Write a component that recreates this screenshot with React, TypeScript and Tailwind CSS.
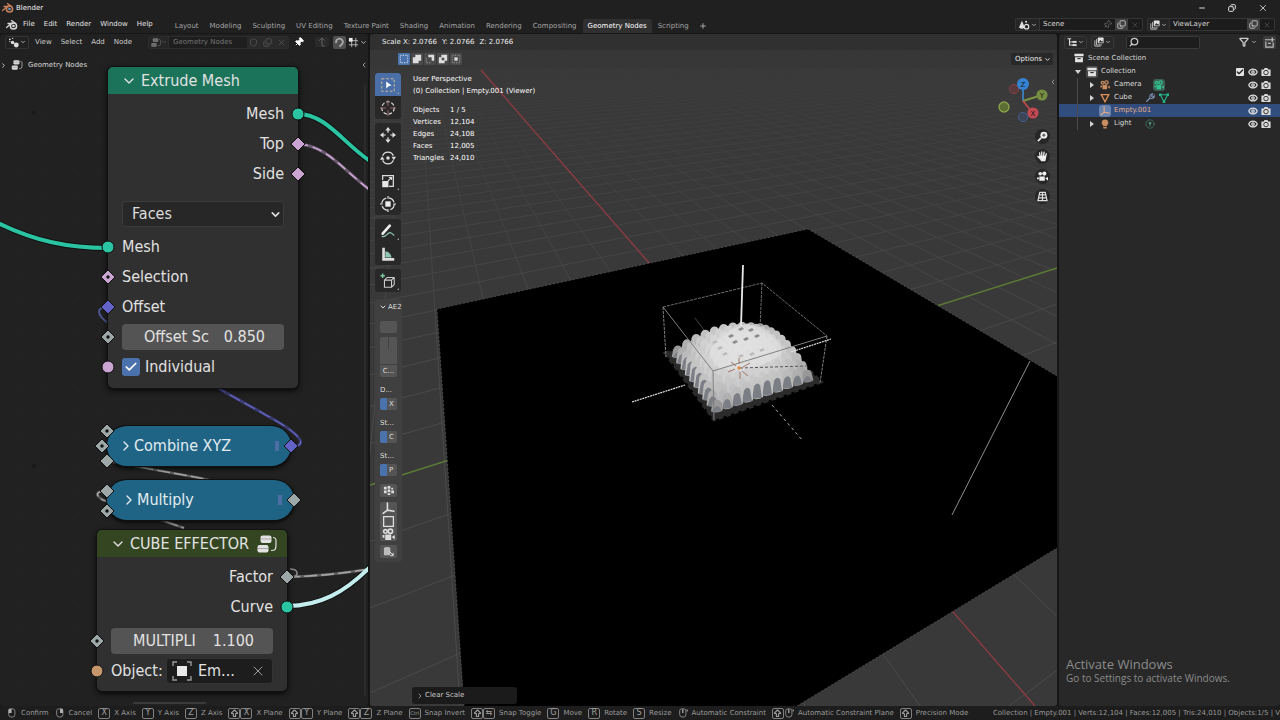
import type { ReactNode } from "react";
import { ArrowBigUp, Check, ChevronDown, ChevronLeft, ChevronRight, Copy, Eye, Filter, Minus, Pin, Plus, Search, Shield, X } from "lucide-react";

const workspaces = ["Layout", "Modeling", "Sculpting", "UV Editing", "Texture Paint", "Shading", "Animation", "Rendering", "Compositing", "Geometry Nodes", "Scripting"];

const stats = [
  ["Objects", "1 / 5"],
  ["Vertices", "12,104"],
  ["Edges", "24,108"],
  ["Faces", "12,005"],
  ["Triangles", "24,010"],
];

const hints: { keys: string[]; label: string }[] = [
  { keys: ["lmb"], label: "Confirm" },
  { keys: ["rmb"], label: "Cancel" },
  { keys: ["X"], label: "X Axis" },
  { keys: ["Y"], label: "Y Axis" },
  { keys: ["Z"], label: "Z Axis" },
  { keys: ["shift", "X"], label: "X Plane" },
  { keys: ["shift", "Y"], label: "Y Plane" },
  { keys: ["shift", "Z"], label: "Z Plane" },
  { keys: ["Ctrl"], label: "Snap Invert" },
  { keys: ["shift", "tab"], label: "Snap Toggle" },
  { keys: ["G"], label: "Move" },
  { keys: ["R"], label: "Rotate" },
  { keys: ["S"], label: "Resize" },
  { keys: ["mmb"], label: "Automatic Constraint" },
  { keys: ["shift", "mmb"], label: "Automatic Constraint Plane" },
  { keys: ["shift"], label: "Precision Mode" },
];

/* ---------- icons ---------- */

function BlenderLogo({ color, ring }: { color: string; ring: string }) {
  return (
    <svg viewBox="0 0 24 20" className="h-[10px] w-[12px] shrink-0" aria-hidden="true">
      <path d="M1 15 L12 6 M4 7 H14 M11 1 L19 7" stroke={color} strokeWidth="2.6" strokeLinecap="round" fill="none" />
      <circle cx="15" cy="12" r="6.2" stroke={color} strokeWidth="3" fill="none" />
      <circle cx="15" cy="12" r="2.6" fill={ring} />
    </svg>
  );
}

function NodeTreeIcon({ className }: { className?: string }) {
  return (
    <svg viewBox="0 0 20 18" className={className} aria-hidden="true">
      <rect x="3.5" y="0.5" width="11" height="7.5" rx="2" fill="currentColor" />
      <rect x="0.5" y="10" width="11" height="7.5" rx="2" fill="currentColor" />
      <path d="M3.5 4 H14 M1 13.5 H11" stroke="#00000055" strokeWidth="0.8" />
      <path d="M16 2.5 C19.5 2.5 19 5 19 9 C19 14.5 18.5 15.5 14 15.5" stroke="currentColor" strokeWidth="1.2" fill="none" />
    </svg>
  );
}

function NodeEditorIcon() {
  return (
    <svg viewBox="0 0 12 12" className="size-[11px]" aria-hidden="true">
      <g fill="#dcdcdc">
        <circle cx="2" cy="2.5" r="1" />
        <circle cx="5" cy="1.5" r="0.7" />
        <circle cx="5" cy="6" r="1.9" />
        <circle cx="9" cy="8.8" r="2.7" />
        <circle cx="2" cy="5" r="0.7" />
      </g>
    </svg>
  );
}

function SceneIcon() {
  return (
    <svg viewBox="0 0 14 12" className="h-[10px] w-[12px]" aria-hidden="true">
      <path d="M4.5 1 L8 9 Q4.5 12 1 9 Z" fill="#e0e0e0" />
      <circle cx="10" cy="8" r="2.7" fill="none" stroke="#e0e0e0" strokeWidth="1.4" />
      <circle cx="9.5" cy="2" r="1.2" fill="#e0e0e0" />
    </svg>
  );
}

function LayersIcon() {
  return (
    <svg viewBox="0 0 12 12" className="size-[10px]" aria-hidden="true">
      <path d="M1 4 V11 H8 M3 2.5 V9.5 H9.5" stroke="#d0d0d0" fill="none" />
      <rect x="4.5" y="0.5" width="7" height="7" rx="1" fill="#e0e0e0" />
      <path d="M5.5 6.5 L7.5 3.5 L9 5.2 L10 4.4 L11 6.5 Z" fill="#333" />
    </svg>
  );
}

function TreeIcon() {
  return (
    <svg viewBox="0 0 12 12" className="size-[10px]" aria-hidden="true">
      <path d="M0.5 2 H5 M3 2 V9.5 H7 M3 6 H7" stroke="#d8d8d8" strokeWidth="1.3" fill="none" />
      <rect x="6.5" y="4.7" width="5" height="2.4" fill="#d8d8d8" />
      <rect x="6.5" y="8.5" width="5" height="2.4" fill="#d8d8d8" />
    </svg>
  );
}

function MovieCamera({ className }: { className?: string }) {
  return (
    <svg viewBox="0 0 12 12" className={className} aria-hidden="true">
      <g fill="none" stroke="currentColor" strokeWidth="1.5">
        <circle cx="3.2" cy="3.2" r="1.7" />
        <circle cx="7.8" cy="3" r="2" />
      </g>
      <path d="M3 6 H8.5 V11 H3 Z M9 8.3 L11.8 6.5 V10.6 Z M0.5 6.5 H2.3 V9 H0.5 Z" fill="currentColor" />
    </svg>
  );
}

function RenderCamera() {
  return (
    <svg viewBox="0 0 12 12" className="size-[10px] text-[#dadada]" aria-hidden="true">
      <path d="M0.5 3 H3.5 L4.2 1.2 H7.8 L8.5 3 H11.5 V10.8 H0.5 Z" fill="currentColor" />
      <circle cx="6" cy="6.7" r="2.7" fill="none" stroke="#282828" strokeWidth="1.1" />
    </svg>
  );
}

function ArchiveIcon() {
  return (
    <svg viewBox="0 0 12 12" className="size-[10px]" aria-hidden="true">
      <path d="M0.5 1 H11.5 V4 H0.5 Z M1.3 5 H10.7 V11 H1.3 Z" fill="#e4e4e4" />
      <rect x="4" y="6" width="4" height="1.4" fill="#333" />
    </svg>
  );
}

function EmptyAxes({ className }: { className?: string }) {
  return (
    <svg viewBox="0 0 12 12" className={className} aria-hidden="true">
      <path d="M5 1 V7.5 L1 10.5 M5 7.5 L11 8.5" stroke="currentColor" strokeWidth="1.5" fill="none" strokeLinecap="round" />
    </svg>
  );
}

function MouseIcon({ button }: { button: string }) {
  return (
    <svg viewBox="0 0 12 12" className="h-[10px] w-[10px]" aria-hidden="true">
      <path d="M2 3.5 Q2 1 4.5 1 H7 Q9.5 1 9.5 3.5 V8 Q9.5 11 6 11 Q2 11 2 8 Z" stroke="#8c8c8c" fill="none" strokeWidth="1.1" />
      {button === "lmb" && <path d="M2 1 H5.5 V6 H2 Z" fill="#b0b0b0" />}
      {button === "rmb" && <path d="M6 1 H9.5 V6 H6 Z" fill="#b0b0b0" />}
      {button === "mmb" && <path d="M5 1.5 H6.5 V6 H5 Z M10.5 1 L12 3 L10.5 5 Z" fill="#b0b0b0" />}
    </svg>
  );
}

/* ---------- top bars ---------- */

function TitleBar() {
  return (
    <div className="flex h-4 shrink-0 items-center justify-between bg-[#202020] pl-[2px] pr-3">
      <div className="flex items-center gap-[2px] text-[#f0f0f0]">
        <BlenderLogo color="#c9805a" ring="#6f97c4" />
        <span>Blender</span>
      </div>
      <div className="flex items-center gap-[22px] text-[#dddddd]">
        <button aria-label="Minimize"><Minus className="size-2" strokeWidth={3} /></button>
        <button aria-label="Restore"><Copy className="size-2 -scale-x-100" strokeWidth={3} /></button>
        <button aria-label="Close"><X className="size-[10px]" strokeWidth={2} /></button>
      </div>
    </div>
  );
}

function DataBlock({ icon, name, pin }: { icon: ReactNode; name: string; pin?: boolean }) {
  return (
    <div className="flex h-[13px] w-[128px] items-center overflow-hidden rounded-[2px] border border-[#353535] bg-[#1c1c1c]">
      <button className="flex h-full items-center gap-[1px] border-r border-[#353535] bg-[#252525] px-[2px]" aria-label={`Browse ${name}`}>
        {icon}
        <ChevronDown className="size-[6px]" strokeWidth={3} />
      </button>
      <span className="flex-1 pl-[3px] text-[#d8d8d8]">{name}</span>
      {pin && <Pin className="mr-[3px] size-[9px] rotate-45 text-[#777777]" />}
      <button className="flex h-full items-center bg-[#3f3f3f] px-[2px] text-[#dddddd]" aria-label={`New ${name}`}><Copy className="size-[9px] -scale-y-100" /></button>
      <button className="px-[3px] text-[#555555]" aria-label={`Remove ${name}`}><X className="size-2" /></button>
    </div>
  );
}

function TopBar() {
  return (
    <div className="flex h-[17px] shrink-0 items-center bg-[#202020] pl-[6px] pr-[5px]">
      <BlenderLogo color="#d8d8d8" ring="#d8d8d8" />
      <nav className="ml-[5px] flex gap-[9px] text-[#e4e4e4]">
        {["File", "Edit", "Render", "Window", "Help"].map((m) => (
          <button key={m}>{m}</button>
        ))}
      </nav>
      <div className="ml-[17px] flex h-full items-end gap-[1px] text-[#a4a4a4]">
        {workspaces.map((w) => (
          <button
            key={w}
            className={`h-[14px] rounded-t-[3px] px-[5px] ${w === "Geometry Nodes" ? "bg-[#303030] text-white" : ""}`}
          >
            {w}
          </button>
        ))}
        <button className="h-[14px] px-1" aria-label="Add workspace"><Plus className="size-2" strokeWidth={3} /></button>
      </div>
      <div className="ml-auto flex items-center gap-1 text-[#cccccc]">
        <DataBlock icon={<SceneIcon />} name="Scene" pin />
        <DataBlock icon={<LayersIcon />} name="ViewLayer" />
      </div>
    </div>
  );
}

/* ---------- node editor ---------- */

const TEAL = "#2bc4a2";
const PINK = "#cba5d2";
const GREY = "#9da7a7";
const VIOLET = "#6363c7";

function Socket({ color, shape = "diamond", dot, side, x, y }: { color: string; shape?: string; dot?: boolean; side?: "left" | "right"; x?: number; y?: number }) {
  const place = side === "left" ? "-left-2 top-1/2 -translate-y-1/2" : side === "right" ? "-right-2 top-1/2 -translate-y-1/2" : "-translate-x-1/2 -translate-y-1/2";
  return (
    <svg viewBox="0 0 16 16" className={`absolute size-4 ${place}`} style={side ? undefined : { left: x, top: y }} aria-hidden="true">
      {shape === "circle" ? (
        <circle cx="8" cy="8" r="6" fill={color} stroke="#101010" strokeWidth="1" />
      ) : (
        <path d="M8 1 L15 8 L8 15 L1 8 Z" fill={color} stroke="#101010" strokeWidth="1" />
      )}
      {dot && <circle cx="8" cy="8" r="1.7" fill="#101010" />}
    </svg>
  );
}

function Row({ children, out }: { children: ReactNode; out?: boolean }) {
  return <div className={`relative flex h-[30px] items-center px-[14px] ${out ? "justify-end" : ""}`}>{children}</div>;
}

function NumberField({ id, label, value }: { id: string; label: string; value: string }) {
  return (
    <div className="flex h-[26px] w-full items-center justify-between rounded bg-[#545454] pl-[22px] pr-[19px] leading-5">
      <label htmlFor={id}>{label}</label>
      <input id={id} defaultValue={value} className="h-5 w-[44px] bg-transparent text-right outline-none" />
    </div>
  );
}

function CollapsedNode({ label, className }: { label: string; className: string }) {
  return (
    <div className={`absolute flex h-10 items-center rounded-[20px] bg-[#206485] text-[#e2ecf0] shadow-[0_0_0_1px_#111111,0_2px_5px_#000000] ${className}`}>
      <ChevronRight className="size-4" strokeWidth={2} />
      <span>{label}</span>
      <span className="ml-auto mr-[12px] h-[10px] w-[4px] bg-[#4d6ea5]" />
    </div>
  );
}

function NodeLinks() {
  return (
    <svg className="absolute inset-0 h-full w-full" fill="none" aria-hidden="true">
      <defs>
        <pattern id="dots" x="18" y="10" width="27" height="27" patternUnits="userSpaceOnUse">
          <rect width="1" height="1" fill="#2c2c2c" />
        </pattern>
      </defs>
      <rect width="100%" height="100%" fill="url(#dots)" />
      <rect x="32" y="61" width="4" height="4" fill="#1a1a1a" />
      <rect x="32" y="414" width="4" height="4" fill="#1a1a1a" />
      <g stroke="#101010" strokeWidth="6">
        <path d="M-2 173 C35 191 68 198 108 198" />
        <path d="M298 64 C326 64 343 93 370 111" />
        <path d="M287 556 C320 556 345 542 370 517" />
      </g>
      <path d="M-2 173 C35 191 68 198 108 198" stroke={TEAL} strokeWidth="4" />
      <path d="M298 64 C326 64 343 93 370 111" stroke={TEAL} strokeWidth="4" />
      <path d="M298 94 C326 95 343 120 370 140" stroke="#6a5a6f" strokeWidth="3" />
      <path d="M298 94 C326 95 343 120 370 140" stroke={PINK} strokeWidth="1.6" strokeDasharray="10 5" />
      <path d="M108 257 C95 257 97 265 108 273" stroke="#4c5893" strokeWidth="2" />
      <path d="M200 328 L273 369 C305 387 305 396 294 396" stroke="#3c3c74" strokeWidth="3" />
      <path d="M200 328 L273 369 C305 387 305 396 294 396" stroke="#6a6ac8" strokeWidth="1.2" strokeDasharray="12 5" />
      <g stroke="#5c5c5c" strokeWidth="2.6">
        <path d="M107 411 L200 428 L293 449" />
        <path d="M107 441 C94 441 96 446 103 450 L184 478" />
        <path d="M287 527 C320 526 345 523 370 519" />
      </g>
      <g stroke="#a4a4a4" strokeWidth="1.6" strokeDasharray="13 4">
        <path d="M107 411 L200 428 L293 449" />
        <path d="M107 441 C94 441 96 446 103 450 L184 478" />
        <path d="M287 527 C320 526 345 523 370 519" />
      </g>
      <path d="M287 556 C320 556 345 542 370 517" stroke="#c4eeee" strokeWidth="4" />
      <path d="M290 519 C298 519 300 525 292 528" stroke="#888888" strokeWidth="1.6" />
    </svg>
  );
}

function ExtrudeMeshNode() {
  return (
    <section className="absolute left-[108px] top-[17px] w-[190px] rounded-[5px] bg-[#303030] pb-[6px] shadow-[0_0_0_1px_#111111,0_2px_6px_#000000]">
      <h2 className="mb-[5px] flex h-[27px] items-center gap-1 rounded-t-[5px] bg-[#1b735a] pl-[13px]">
        <ChevronDown className="size-4" strokeWidth={2} />
        Extrude Mesh
      </h2>
      <Row out>Mesh<Socket color={TEAL} shape="circle" side="right" /></Row>
      <Row out>Top<Socket color={PINK} side="right" /></Row>
      <Row out>Side<Socket color={PINK} side="right" /></Row>
      <div className="relative mx-[14px] mb-[5px] mt-[12px] text-[#dddddd]">
        <select aria-label="Mode" className="h-[26px] w-full appearance-none rounded border border-[#3b3b3b] bg-[#272727] pl-[9px] outline-none">
          <option>Faces</option>
        </select>
        <ChevronDown className="pointer-events-none absolute right-[2px] top-[7px] size-[13px]" strokeWidth={3} />
      </div>
      <Row>Mesh<Socket color={TEAL} shape="circle" side="left" /></Row>
      <Row>Selection<Socket color={PINK} dot side="left" /></Row>
      <Row>Offset<Socket color={VIOLET} side="left" /></Row>
      <Row><NumberField id="offset-scale" label="Offset Sc" value="0.850" /><Socket color={GREY} dot side="left" /></Row>
      <Row>
        <label className="relative flex items-center gap-[5px]">
          <input type="checkbox" defaultChecked className="size-[18px] appearance-none rounded-[3px] bg-[#4c72ad]" />
          <Check className="absolute left-[2px] size-[14px] text-white" strokeWidth={3} />
          Individual
        </label>
        <Socket color={PINK} shape="circle" side="left" />
      </Row>
    </section>
  );
}

function CubeEffectorNode() {
  return (
    <section className="absolute left-[97px] top-[480px] w-[190px] rounded-[5px] bg-[#303030] pb-[5px] shadow-[0_0_0_1px_#111111,0_2px_6px_#000000]">
      <h2 className="mb-[5px] flex h-[27px] items-center rounded-t-[5px] bg-[#344621] pl-[13px]">
        <ChevronDown className="mr-1 size-4 shrink-0" strokeWidth={2} />
        CUBE EFFECTOR
        <NodeTreeIcon className="ml-auto mr-[10px] h-[18px] w-5 shrink-0" />
      </h2>
      <Row out>Factor<Socket color={GREY} side="right" /></Row>
      <Row out>Curve<Socket color={TEAL} shape="circle" side="right" /></Row>
      <div className="mt-1">
        <Row><NumberField id="multiplier" label="MULTIPLI" value="1.100" /><Socket color={GREY} dot side="left" /></Row>
      </div>
      <Row>
        <span>Object:</span>
        <button className="ml-auto flex h-[26px] w-[107px] items-center rounded border border-[#333333] bg-[#1d1d1d] pl-[5px] pr-[6px]">
          <svg viewBox="0 0 20 20" className="mr-[6px] size-5" aria-hidden="true">
            <path d="M1 5 V1 H5 M15 1 H19 V5 M19 15 V19 H15 M5 19 H1 V15" stroke="#999999" strokeWidth="1.4" fill="none" />
            <rect x="5" y="5" width="10" height="10" fill="#e8e8e8" />
          </svg>
          Em...
          <X className="ml-auto size-4" strokeWidth={1} />
        </button>
        <Socket color="#c5966c" shape="circle" side="left" />
      </Row>
    </section>
  );
}

function NodeEditor() {
  return (
    <section className="flex min-w-0 flex-[368_1_0%] flex-col overflow-hidden rounded-[3px] bg-[#212121]">
      <header className="flex h-4 shrink-0 items-center pl-[5px] text-[#cccccc]">
        <button className="flex h-[13px] items-center gap-[1px] rounded-[2px] border border-[#333333] px-[2px]" aria-label="Editor type">
          <NodeEditorIcon />
          <ChevronDown className="size-[6px]" strokeWidth={3} />
        </button>
        <nav className="ml-[6px] flex gap-[9px]">
          {["View", "Select", "Add", "Node"].map((m) => (
            <button key={m}>{m}</button>
          ))}
        </nav>
        <div className="ml-4 flex h-[13px] items-center overflow-hidden rounded-[2px] border border-[#2d2d2d] bg-[#1e1e1e] text-[#747474]">
          <span className="flex h-full w-5 items-center justify-center border-r border-[#2d2d2d] bg-[#262626]">
            <NodeTreeIcon className="h-[9px] w-[10px]" />
            <ChevronDown className="size-[6px]" />
          </span>
          <span className="w-[78px] pl-1">Geometry Nodes</span>
          <span className="flex h-full items-center gap-[5px] bg-[#2a2a2a] px-[2px] text-[#5a5a5a]">
            <Shield className="size-[9px]" /><Copy className="size-[9px] -scale-y-100" /><X className="size-[9px]" />
          </span>
        </div>
        <Pin className="ml-[5px] size-[10px] rotate-45 text-white" fill="white" />
        <span className="ml-auto rounded-[2px] bg-[#2a2a2a] px-[2px] text-[#666666]">
          <svg viewBox="0 0 10 11" className="size-[10px]" fill="none" stroke="currentColor"><path d="M8 10 H5 V1 M2 4 L5 1 L8 4" /></svg>
        </span>
        <button className="ml-1 rounded-[2px] bg-[#505050] p-[1px]" aria-label="Snap">
          <svg viewBox="0 0 12 12" className="size-[11px]" fill="none"><path d="M2.5 6.5 A3.6 3.6 0 1 1 8.5 8 L6 10.5" stroke="#aaaaaa" strokeWidth="2" /></svg>
        </button>
        <svg viewBox="0 0 12 12" className="ml-[2px] size-[11px]" aria-hidden="true">
          <path d="M4 2 V11 M8.5 1 V11 M1 4 H11 M1 8.5 H11" stroke="#bbbbbb" />
          <rect x="1" y="1" width="4" height="4" fill="#eeeeee" />
        </svg>
        <ChevronDown className="mx-[1px] size-[7px]" strokeWidth={3} />
      </header>
      <div className="relative min-h-0 flex-1 overflow-hidden font-['DejaVu_Sans_Condensed','DejaVu_Sans',sans-serif] text-base leading-none text-[#e2e2e2]">
        <span className="absolute bottom-[2px] left-[133px] h-[2px] w-[73px] rounded bg-[#3a3a3a]" />
        <span className="absolute bottom-[10px] right-[2px] top-[34px] w-[2px] rounded bg-[#2b2b2b]" />
        <NodeLinks />
        <div className="relative flex h-[30px] items-center font-['DejaVu_Sans',sans-serif] text-[7px] text-[#d8d8d8]">
          <ChevronRight className="size-[7px]" strokeWidth={3} />
          <NodeTreeIcon className="ml-1 h-[10px] w-3" />
          <span className="ml-[5px]">Geometry Nodes</span>
          <ChevronLeft className="ml-auto size-2" />
        </div>
        <CollapsedNode label="Combine XYZ" className="left-[107px] top-[376px] w-[184px] pl-[11px]" />
        <CollapsedNode label="Multiply" className="left-[107px] top-[430px] w-[187px] pl-[14px]" />
        <Socket color={GREY} dot x={107} y={381} />
        <Socket color={GREY} dot x={102} y={396} />
        <Socket color={GREY} x={107} y={411} />
        <Socket color={VIOLET} x={291} y={396} />
        <Socket color={GREY} x={107} y={441} />
        <Socket color={GREY} dot x={107} y={461} />
        <Socket color={GREY} x={294} y={450} />
        <ExtrudeMeshNode />
        <CubeEffectorNode />
      </div>
    </section>
  );
}

/* ---------- 3D viewport ---------- */

const VP_X = [415, -3];
const VP_Y = [1980, -15];

function FloorGrid() {
  const lines: number[][] = [];
  for (let k = -30; k <= 45; k++) {
    if (k !== 0) lines.push([VP_X[0], VP_X[1], 1035 + 115 * k, 706]);
  }
  for (let k = -45; k <= 8; k++) {
    if (k !== 0) lines.push([VP_Y[0], VP_Y[1], -329 + 223 * k, 706]);
  }
  return (
    <g mask="url(#fade)" stroke="#4b4b4b" strokeWidth="1">
      {lines.map(([x1, y1, x2, y2], i) => (
        <line key={i} x1={x1} y1={y1} x2={x2} y2={y2} />
      ))}
    </g>
  );
}

// corners of the array's base: left, front, right, back
const base = [[671, 353], [714, 414], [815, 380], [762, 329]];

function point(u: number, v: number) {
  const [l, f, r, b] = base;
  const w = [(1 - u) * (1 - v), u * (1 - v), u * v, (1 - u) * v];
  return [0, 1].map((i) => l[i] * w[0] + f[i] * w[1] + r[i] * w[2] + b[i] * w[3]);
}

function DomeArray() {
  const n = 10;
  const cells: ReactNode[] = [];
  for (let i = 0; i < n; i++) {
    for (let j = n - 1; j >= 0; j--) {
      const u = (i + 0.5) / n;
      const v = (j + 0.5) / n;
      const [x, y] = point(u, v);
      const d = Math.hypot(u - 0.5, v - 0.5) / 0.66;
      const lift = Math.max(0, 1 - d * d);
      const h = 4 + lift * 20;
      const edge = i === n - 1 || j === 0;
      const c = Math.round(126 + Math.sqrt(lift) * 98);
      const inner = edge ? "#7c7e85" : `rgb(${c - 8},${c - 8},${c - 6})`;
      cells.push(
        <g key={`${i}-${j}`}>
          <path
            d={`M${x - 6} ${y + 2} L${x - 4.5} ${y - h} Q${x - 3} ${y - h - 4} ${x} ${y - h - 4} Q${x + 4} ${y - h - 4} ${x + 4.5} ${y - h} L${x + 6} ${y + 1} Q${x} ${y + 5} ${x - 6} ${y + 2}Z`}
            fill={`rgb(${c},${c},${c})`}
          />
          <path
            d={`M${x - 5} ${y + 3} L${x - 3} ${y - h + 5} Q${x} ${y - h} ${x + 3} ${y - h + 4} L${x + 5} ${y + 2}Z`}
            fill={inner}
          />
        </g>
      );
    }
  }
  const holes = [[731, 336], [741, 329], [751, 330], [757, 336], [746, 339], [735, 342], [715, 342], [720, 348], [725, 354], [741, 356], [752, 354], [762, 350]];
  return (
    <g>
      <path d="M665 353 L763 324 L821 382 L714 420 Z" fill="#2b2b2b" stroke="#2b2b2b" strokeWidth="3" strokeDasharray="5 3" />
      {cells}
      <path d="M714 344 Q742 314 764 330 Q784 344 782 354 Q750 376 720 368 Q704 356 714 344Z" fill="#e2e2e2" opacity="0.6" />
      {holes.map(([x, y], i) => (
        <path key={i} d={`M${x - 3} ${y} L${x + 1} ${y - 2} L${x + 3} ${y} L${x - 1} ${y + 2}Z`} fill={i < 6 ? "#8b8b8b" : "#bcbcbc"} />
      ))}
    </g>
  );
}

function Scene() {
  return (
    <svg viewBox="370 50 687 656" preserveAspectRatio="xMidYMid slice" className="absolute inset-0 h-full w-full" fill="none" role="img" aria-label="Scene">
      <defs>
        <linearGradient id="fadeRamp" x1="0" y1="50" x2="0" y2="706" gradientUnits="userSpaceOnUse">
          <stop offset="0" stopColor="#fff" stopOpacity="0" />
          <stop offset="0.2" stopColor="#fff" stopOpacity="0.5" />
          <stop offset="0.5" stopColor="#fff" />
        </linearGradient>
        <mask id="fade" maskUnits="userSpaceOnUse" x="370" y="50" width="687" height="656">
          <rect x="370" y="50" width="687" height="656" fill="url(#fadeRamp)" />
        </mask>
      </defs>
      <rect x="370" y="50" width="687" height="656" fill="#393939" />
      <FloorGrid />
      <path d="M481 70 L1035 706" stroke="#8d3b44" strokeWidth="1.4" />
      <path d="M370 485 L1057 268" stroke="#5e7c35" strokeWidth="1.4" />
      <path d="M437 309 L808 229 L1057 376 V548 L797 706 H464 Z" fill="#000000" />
      <path d="M1057 376 L808 229 L437 309 L464 706 M797 706 L1057 548" stroke="#666666" strokeWidth="0.6" strokeDasharray="2 2" />
      <path d="M1030 361 L952 515" stroke="#8e8e8e" />
      <path d="M695 318 L707 334" stroke="#555555" strokeWidth="0.8" />
      <path d="M663 307 L762 283 L827 336 M762 283 L760 328" stroke="#8a8a8a" strokeWidth="0.8" strokeDasharray="3 1" />
      <DomeArray />
      <g stroke="#808080">
        <path d="M663 307 L713 371 L827 336 M713 371 L714 420" />
        <path d="M663 307 L666 357 M827 336 L820 383" strokeDasharray="3 1" />
      </g>
      <path d="M743 265 L741 326" stroke="#e8e8e8" strokeWidth="1.8" />
      <path d="M632 402 L685 385 M791 352 L831 339" stroke="#e4e4e4" strokeWidth="1.2" strokeDasharray="2 0.7" />
      <path d="M772 405 L803 441" stroke="#aaaaaa" strokeDasharray="3 3" />
      <path d="M740 368 L806 366" stroke="#555555" strokeDasharray="3 2" />
      <path d="M728 372 L735 369 M743 367 L750 363 M731 362 L736 366 M742 371 L748 376 M739 358 V364 M740 372 V379" stroke="#a07468" />
      <circle cx="739" cy="368" r="1.7" fill="#e58a3c" />
    </svg>
  );
}

const toolGroups: { name: string; draw: ReactNode; more?: boolean }[][] = [
  [
    { name: "Select Box", more: true, draw: <><rect x="2" y="2" width="14" height="14" stroke="#d8c39a" strokeDasharray="3 2" /><path d="M7 5 L13 9.5 L10 10 L7 13 Z" fill="#fff" /></> },
    { name: "Cursor", draw: <><circle cx="9" cy="9" r="7" stroke="#ddd" strokeWidth="1.3" strokeDasharray="4 2" /><path d="M9 0 V7 M9 11 V18 M0 9 H7 M11 9 H18" stroke="#a06a6a" /></> },
  ],
  [
    { name: "Move", draw: <><path d="M9 3 V6.5 M9 15 V11.5 M3 9 H6.5 M15 9 H11.5" stroke="#ddd" strokeWidth="1.4" /><path d="M9 0 L12 4 H6Z M9 18 L12 14 H6Z M0 9 L4 6 V12Z M18 9 L14 6 V12Z" fill="#ddd" /></> },
    { name: "Rotate", draw: <><path d="M3 6.5 A6.5 6.5 0 0 1 15 6.5 M15 11.5 A6.5 6.5 0 0 1 3 11.5" stroke="#ddd" strokeWidth="1.4" /><path d="M0 11 L2.5 7 L5 11Z M13 7.5 L15.5 11.5 L18 7.5Z" fill="#ddd" /><circle cx="9" cy="9" r="2" fill="#ddd" /></> },
    { name: "Scale", more: true, draw: <><path d="M3 8 V3 H15 V15 H10" stroke="#ddd" strokeWidth="1.4" /><rect x="2.5" y="9" width="7" height="7" fill="#e6e6e6" /><path d="M9 9 L13 5 M10 5 H13 V8" stroke="#ddd" strokeWidth="1.2" /></> },
    { name: "Transform", draw: <><circle cx="9" cy="9" r="7" stroke="#ddd" strokeWidth="1.4" strokeDasharray="8 3" /><rect x="6" y="6" width="6" height="6" fill="#eee" /><path d="M9 0 V3 M9 15 V18 M0 9 H3 M15 9 H18" stroke="#ddd" strokeWidth="1.3" /></> },
  ],
  [
    { name: "Annotate", more: true, draw: <><path d="M3 12 L11 3" stroke="#eee" strokeWidth="3" strokeLinecap="round" /><path d="M2 15 C7 17 8 10 12 11 Q14 12 16 14" stroke="#8fc4b4" strokeWidth="1.4" /></> },
    { name: "Measure", draw: <><path d="M4 2 V15 H16" stroke="#ddd" strokeWidth="3" /><path d="M6 6 Q12 7 13 13 H6 Z" fill="#8fc4b4" /></> },
  ],
  [
    { name: "Add Cube", more: true, draw: <><path d="M5 8 L8 5 H16 V13 L13 16 H5 Z M5 8 H13 V16 M13 8 L16 5" stroke="#ccc" strokeWidth="1.2" /><path d="M3 0.5 V5.5 M0.5 3 H5.5" stroke="#7ec7a4" strokeWidth="1.6" /></> },
  ],
];

function Toolbar() {
  return (
    <div className="flex w-[26px] flex-col gap-1">
      {toolGroups.map((group) => (
        <div key={group[0].name} className="flex flex-col overflow-hidden rounded-[3px] bg-[#282828]">
          {group.map((t) => (
            <button key={t.name} aria-label={t.name} className={`relative flex h-[23px] items-center justify-center ${t.name === "Select Box" ? "bg-[#4a6fa8]" : ""}`}>
              <svg viewBox="0 0 18 18" className="size-4" fill="none">{t.draw}</svg>
              {t.more && <span className="absolute bottom-[2px] right-[2px] border-b-2 border-l-2 border-b-[#999999] border-l-transparent" />}
            </button>
          ))}
        </div>
      ))}
    </div>
  );
}

function SidePanel() {
  return (
    <div className="mt-[7px] flex w-[27px] flex-col rounded-[4px] bg-[#404040] px-[5px] pb-1 text-[#dddddd]">
      <div className="flex h-4 items-center gap-[1px]">
        <ChevronDown className="-ml-[1px] size-2 shrink-0" strokeWidth={3} />
        <span className="whitespace-nowrap">AE2</span>
      </div>
      <span className="mt-[6px] h-3 rounded-[2px] bg-[#555555]" />
      <span className="mt-1 flex h-[27px] justify-center rounded-t-[2px] bg-[#555555]"><span className="h-3 border-l border-[#444444]" /></span>
      <button className="mt-[1px] h-3 rounded-b-[2px] bg-[#555555]">C...</button>
      {[["D...", "X"], ["St...", "C"], ["St...", "P"]].map(([label, key]) => (
        <div key={key} className="mt-[5px] flex flex-col">
          <span className="flex h-4 items-center">{label}</span>
          <button className="flex h-3 items-center overflow-hidden rounded-[2px] bg-[#545454]">
            <span className="mr-[2px] h-full w-[7px] bg-[#4a72ad]" />{key}
          </button>
        </div>
      ))}
      <button className="mt-2 flex h-[13px] items-center justify-center rounded-[2px] bg-[#555555]" aria-label="Cloner">
        <svg viewBox="0 0 12 12" className="size-[11px]" fill="#dddddd"><path d="M1 2 H4 V5 H1Z M5 1 H8 V4 H5Z M9 3 H11 V5 H9Z M1 6 H4 V9 H1Z M5 5 H8 V8 H5Z M9 6 H12 V9 H9Z M5 9 H8 V11 H5Z" /></svg>
      </button>
      <div className="mt-[5px] flex flex-col items-center rounded-[2px] bg-[#555555]">
        <EmptyAxes className="size-[13px]" />
        <svg viewBox="0 0 12 12" className="size-[13px]" fill="none"><rect x="1.5" y="1.5" width="9" height="9" stroke="#ddd" strokeWidth="1.2" /></svg>
        <MovieCamera className="size-[13px]" />
      </div>
      <button className="mt-1 flex h-[13px] items-center justify-center rounded-[2px] bg-[#555555]" aria-label="Bake">
        <svg viewBox="0 0 12 12" className="size-[11px]"><path d="M1 2 Q5 0 8 2 V10 H1Z" fill="#bbb" /><path d="M7 6 L11 10 M8 10.5 H11 V7.5" stroke="#eee" fill="none" /></svg>
      </button>
    </div>
  );
}

function Gizmo() {
  return (
    <svg viewBox="996 76 54 48" className="h-12 w-[54px]" fill="none" aria-label="View axes">
      <circle cx="1014" cy="89" r="4.6" fill="#5a3a3d" stroke="#85414a" />
      <circle cx="1023" cy="117" r="4.6" fill="#3c4658" stroke="#455f8e" />
      <circle cx="1004" cy="107" r="5" fill="#5b6e33" stroke="#8aa04b" strokeWidth="1.4" />
      <path d="M1023 101 V84" stroke="#3f8bd0" strokeWidth="1.6" />
      <path d="M1023 101 L1042 95" stroke="#7d9440" strokeWidth="2" />
      <path d="M1023 101 L1032 112" stroke="#c5484f" strokeWidth="1.8" />
      <circle cx="1023" cy="84" r="6" fill="#3583d2" />
      <circle cx="1042" cy="95" r="5.6" fill="#768e42" />
      <circle cx="1033" cy="113" r="5.6" fill="#c34a53" />
      <g fontSize="7" fill="#151515" textAnchor="middle">
        <text x="1023" y="87">Z</text>
        <text x="1042" y="98">Y</text>
        <text x="1033" y="116">X</text>
      </g>
    </svg>
  );
}

const navTools: { name: string; draw: ReactNode }[] = [
  { name: "Zoom", draw: <><circle cx="7.5" cy="4.5" r="3.8" fill="#eee" /><path d="M4.5 7.5 L1 11" stroke="#eee" strokeWidth="1.8" /><path d="M5.7 4.5 H9.3 M7.5 2.7 V6.3" stroke="#333" /></> },
  { name: "Pan", draw: <path d="M3.5 6 L2.8 2 M5.2 5.5 V1 M7.2 5.5 L7.8 1.2 M9 6.5 L10.2 3 M3.5 8.5 L1 6 M3 6 H9.5 L8.5 10.5 H4.8 Z" stroke="#eee" fill="#eee" strokeWidth="1.4" strokeLinecap="round" /> },
  { name: "Camera", draw: <g fill="#eee"><circle cx="3.5" cy="3" r="2" /><circle cx="8" cy="2.8" r="2.3" /><path d="M2.5 6 H8.5 V10.5 H2.5Z M9 8 L12 6.5 V10.5Z M0 7 H2 V9 H0Z" /></g> },
  { name: "Perspective", draw: <path d="M3 1.5 H9 L11 10.5 H1 Z M2.3 4.3 H9.8 M1.4 7.6 H10.6 M6 1.5 V10.5" stroke="#ddd" strokeWidth="1.3" /> },
];

function Viewport() {
  return (
    <section className="flex min-w-0 flex-[687_1_0%] flex-col overflow-hidden rounded-[3px] bg-[#303030]">
      <header className="flex h-4 shrink-0 items-center gap-[5px] pl-3 text-[#eeeeee]">
        <span>Scale X: 2.0766</span><span>Y: 2.0766</span><span>Z: 2.0766</span>
      </header>
      <div className="relative flex min-h-0 flex-1 flex-col overflow-hidden">
        <Scene />
        <div className="relative flex h-[18px] items-center justify-between bg-[#363636]/70 pl-[28px] pr-1">
          <div className="flex gap-[1px]">
            {[
              <rect x="1.5" y="1.5" width="9" height="9" stroke="#fff" strokeDasharray="1.5 1.5" />,
              <path d="M1 4 H4 V1 H11 V8 H8 V11 H1Z" fill="#ddd" />,
              <><path d="M4 1 H11 V8 H8 V4 H4Z" fill="#ddd" /><path d="M1.5 5 V10.5 H7" stroke="#aaa" strokeDasharray="1.5 1.5" /></>,
              <path d="M4 1 H11 V8 H8 V11 H1 V4 H4Z M4.5 4.5 V7.5 H7.5 V4.5Z" fill="#ddd" fillRule="evenodd" />,
              <><rect x="1.5" y="1.5" width="9" height="9" stroke="#aaa" strokeDasharray="1.5 1.5" /><rect x="4" y="4" width="4" height="4" fill="#ddd" /></>,
            ].map((draw, i) => (
              <button key={i} aria-label={`Select mode ${i + 1}`} className={`flex size-3 items-center justify-center rounded-[1px] ${i === 0 ? "bg-[#4a72ad]" : "bg-[#4a4a4a]"}`}>
                <svg viewBox="0 0 12 12" className="size-[10px]" fill="none">{draw}</svg>
              </button>
            ))}
          </div>
          <button className="flex h-3 items-center gap-[2px] rounded-[2px] bg-[#282828] pl-1 pr-[2px] text-[#eeeeee]">
            Options
            <ChevronDown className="size-[7px]" strokeWidth={3} />
          </button>
        </div>
        <div className="relative flex items-start pl-[5px] pt-[5px]">
          <div>
            <Toolbar />
            <SidePanel />
          </div>
          <div className="ml-[11px] leading-3 text-white">
            <p>User Perspective</p>
            <p>(0) Collection | Empty.001 (Viewer)</p>
            <dl className="mt-[7px] grid w-fit grid-cols-[37px_auto]">
              {stats.map(([k, v]) => (
                <div key={k} className="contents"><dt>{k}</dt><dd>{v}</dd></div>
              ))}
            </dl>
          </div>
        </div>
        <div className="absolute right-[7px] top-[26px] flex flex-col items-end gap-[5px]">
          <Gizmo />
          {navTools.map((t) => (
            <button key={t.name} aria-label={t.name} className="flex size-[15px] items-center justify-center rounded-full bg-[#262626]">
              <svg viewBox="0 0 12 12" className="size-[11px]" fill="none">{t.draw}</svg>
            </button>
          ))}
        </div>
        <ChevronLeft className="absolute right-0 top-[28px] size-2 text-[#bbbbbb]" />
        <button className="absolute bottom-[2px] left-[42px] flex h-[17px] w-[105px] items-center gap-[1px] rounded-[3px] bg-[#1b1b1b] pl-1 text-[#c8c8c8]">
          <ChevronRight className="size-2" />
          Clear Scale
        </button>
      </div>
    </section>
  );
}

/* ---------- outliner ---------- */

const dataIcons = {
  camera: <MovieCamera className="size-[10px] text-[#c98d60]" />,
  cube: <svg viewBox="0 0 12 12" className="size-[10px]" fill="none"><path d="M1.5 2 H10.5 L6 10.5 Z" stroke="#dd8f55" strokeWidth="1.6" /></svg>,
  empty: <span className="rounded-[3px] bg-[#6682ad] p-[1px] text-[#e0a886]"><EmptyAxes className="size-[10px]" /></span>,
  light: <svg viewBox="0 0 12 12" className="size-[10px]" fill="#c98d60"><path d="M6 0.5 A4 4 0 0 1 8 8 V11.5 H4 V8 A4 4 0 0 1 6 0.5Z" /><path d="M4 9 H8" stroke="#282828" /></svg>,
};

const objects: { name: string; icon: ReactNode; extra?: ReactNode; selected?: boolean }[] = [
  { name: "Camera", icon: dataIcons.camera, extra: <span className="ml-[12px] rounded-[3px] bg-[#3c6054] p-[1px] text-[#2fc28e]"><MovieCamera className="size-[10px]" /></span> },
  {
    name: "Cube",
    icon: dataIcons.cube,
    extra: (
      <span className="ml-[13px] flex gap-1">
        <svg viewBox="0 0 12 12" className="size-[10px]" fill="none"><path d="M1.5 10.5 L6 6 M6 6 Q5 2 9 1 L8 4 L10 5 L11 3 Q12 7 6.5 6.5" stroke="#7f93b8" strokeWidth="1.3" /></svg>
        <svg viewBox="0 0 12 12" className="size-[10px]" fill="none"><path d="M1.5 2 H10.5 L6 10.5 Z" stroke="#23b489" strokeWidth="1.3" /><path d="M0 0.5 H3 V3.5 H0Z M9 0.5 H12 V3.5 H9Z M4.5 9 H7.5 V12 H4.5Z" fill="#23b489" /></svg>
      </span>
    ),
  },
  { name: "Empty.001", icon: dataIcons.empty, selected: true },
  { name: "Light", icon: dataIcons.light, extra: <svg viewBox="0 0 12 12" className="ml-[14px] size-[10px]" fill="none"><circle cx="6" cy="6" r="5" stroke="#4b8b73" strokeDasharray="3 1" /><circle cx="6" cy="5" r="1.6" fill="#4b8b73" /><path d="M6 6 V9" stroke="#4b8b73" /></svg> },
];

function Toggles() {
  return (
    <span className="ml-auto flex items-center gap-[3px] pr-[9px] text-[#dddddd]">
      <button aria-label="Hide in viewport"><Eye className="size-[10px]" strokeWidth={3} /></button>
      <button aria-label="Disable in renders"><RenderCamera /></button>
    </span>
  );
}

function Outliner() {
  return (
    <section className="flex min-w-0 flex-[221_1_0%] flex-col overflow-hidden rounded-[3px] bg-[#282828]">
      <header className="flex h-4 shrink-0 items-center pl-[5px] pr-1 text-[#cccccc]">
        <button className="flex h-[13px] items-center gap-[1px] rounded-[2px] border border-[#383838] px-[2px]" aria-label="Editor type"><TreeIcon /><ChevronDown className="size-[6px]" strokeWidth={3} /></button>
        <button className="ml-1 flex h-[13px] items-center gap-[1px] rounded-[2px] border border-[#383838] px-[2px]" aria-label="Display mode"><LayersIcon /><ChevronDown className="size-[6px]" strokeWidth={3} /></button>
        <label className="ml-3 flex h-[13px] w-[74px] items-center rounded-[2px] border border-[#3a3a3a] bg-[#1d1d1d] pl-[2px]">
          <Search className="size-[10px] shrink-0 -scale-x-100" strokeWidth={3} />
          <input aria-label="Search" className="w-full min-w-0 bg-transparent outline-none" />
        </label>
        <button className="ml-auto flex h-[13px] items-center gap-[2px] px-[2px]" aria-label="Filter"><Filter className="size-[10px]" strokeWidth={3} /><ChevronDown className="size-[6px]" strokeWidth={3} /></button>
        <button className="ml-1 rounded-[2px] bg-[#3c3c3c] p-[1px]" aria-label="New collection">
          <svg viewBox="0 0 12 12" className="size-[11px]" fill="none"><path d="M1 3 H7 M2 5 V11 H10 V6 M4.5 7 H7.5 M9 0.5 V5.5 M6.5 3 H11.5" stroke="#bbb" strokeWidth="1.3" /></svg>
        </button>
      </header>
      <ul className="mt-[1px] text-[#d8d8d8]">
        <li className="flex h-[14px] items-center gap-1 pl-[15px]"><ArchiveIcon />Scene Collection</li>
        <li>
          <div className="flex h-[13px] items-center pl-[16px]">
            <span className="border-x-[3px] border-t-[4px] border-x-transparent border-t-[#d4d4d4]" />
            <span className="ml-[5px] mr-[3px] rounded-[2px] bg-[#4b4b4b] p-[1px]"><ArchiveIcon /></span>
            Collection
            <input type="checkbox" aria-label="Exclude from view layer" defaultChecked className="ml-auto size-2 appearance-none rounded-[1px] bg-[#e4e4e4]" />
            <Check className="pointer-events-none -ml-2 mr-[4px] size-2 text-[#222222]" strokeWidth={4} />
            <div className="flex"><Toggles /></div>
          </div>
          <ul>
            {objects.map((o) => (
              <li key={o.name} className={`flex h-[13px] items-center ${o.selected ? "bg-[#314d7e] text-[#e3ab84]" : ""}`}>
                <span className="ml-[18px] h-full border-l border-[#4a4a4a]" />
                <span className={`ml-[12px] border-y-[3px] border-l-[4px] border-y-transparent ${o.selected ? "border-l-transparent" : "border-l-[#d4d4d4]"}`} />
                <span className="ml-1 mr-[2px] flex w-[14px] items-center justify-center">{o.icon}</span>
                {o.name}
                {o.extra}
                <Toggles />
              </li>
            ))}
          </ul>
        </li>
      </ul>
      <div className="mt-auto pb-[21px] pl-[7px] font-['Open_Sans',sans-serif] text-[#8b8b8b]">
        <p className="text-[13px] leading-[16px]">Activate Windows</p>
        <p className="text-[10px] leading-[13px]">Go to Settings to activate Windows.</p>
      </div>
    </section>
  );
}

/* ---------- status bar ---------- */

function Key({ name }: { name: string }) {
  if (name.endsWith("mb")) return <MouseIcon button={name} />;
  return (
    <kbd className="flex h-[11px] min-w-[12px] items-center justify-center rounded-[2px] border border-[#808080] font-['DejaVu_Sans',sans-serif] text-[8px] leading-none text-[#a0a0a0]">
      {name === "shift" ? <ArrowBigUp className="size-[9px]" strokeWidth={3} /> : name === "tab" ? "⇆" : name === "Ctrl" ? <span className="text-[5px]">Ctrl</span> : name}
    </kbd>
  );
}

function StatusBar() {
  return (
    <footer className="flex h-[14px] shrink-0 items-center justify-between overflow-hidden whitespace-nowrap bg-[#1d1d1d] pl-[7px] text-[#9a9a9a]">
      <div className="flex shrink-0 gap-[6px]">
        {hints.map((h) => (
          <span key={h.label} className="flex shrink-0 items-center gap-1">
            <span className="flex items-center">{h.keys.map((k) => <Key key={k} name={k} />)}</span>
            {h.label}
          </span>
        ))}
      </div>
      <span className="shrink-0">Collection | Empty.001 | Verts:12,104 | Faces:12,005 | Tris:24,010 | Objects:1/5 | V</span>
    </footer>
  );
}

export default function App() {
  return (
    <div className="flex h-screen w-full flex-col overflow-hidden bg-[#161616] font-['DejaVu_Sans',sans-serif] text-[7px] leading-none">
      <TitleBar />
      <TopBar />
      <main className="mt-[1px] flex min-h-0 flex-1 gap-[2px]">
        <NodeEditor />
        <Viewport />
        <Outliner />
      </main>
      <StatusBar />
    </div>
  );
}
